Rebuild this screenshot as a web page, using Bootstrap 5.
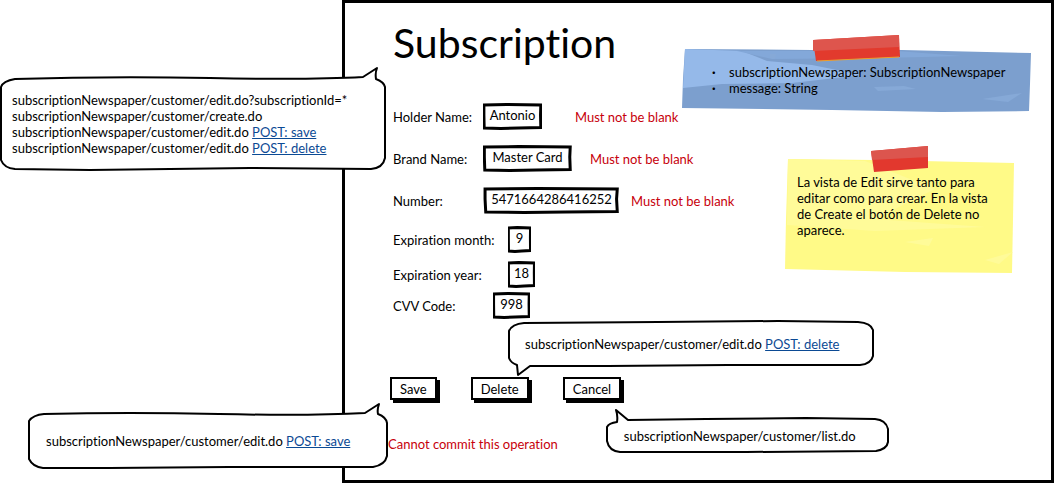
<!DOCTYPE html>
<html lang="en">
<head>
<meta charset="utf-8">
<meta name="viewport" content="width=device-width, initial-scale=1">
<title>Subscription</title>
<link href="https://cdn.jsdelivr.net/npm/bootstrap@5.3.0/dist/css/bootstrap.min.css" rel="stylesheet">
<style>
  body { font-family: Lato, "Open Sans", sans-serif; font-size: 13px; line-height: 16px; color: #000; background: #fff; font-variant-ligatures: none; }
  h1 { font-size: 41px; line-height: 48px; font-weight: 400; }
  a { color: #0b4a94; }
  .side-notes { width: 342px; padding-top: 78px; gap: 243px; }
  .screen { border: 3px solid #000; margin-right: 1px; padding-bottom: 25px; min-width: 0; }
  .callout { z-index: 2; flex: none; }
  .callout svg, .sticky > svg { position: absolute; overflow: visible; left: 0; top: 0; z-index: -1; }
  .callout svg { fill: #fff; stroke: #000; stroke-width: 2; stroke-linejoin: round; stroke-linecap: round; }
  .callout-urls { width: 386px; padding: 14px 12px; }
  .callout-save { width: 358px; padding: 20px 17px 19px; margin-left: 29px; }
  .callout-delete { width: 366px; padding: 15px 17px 14px; margin-left: 163px; margin-top: 2px; }
  .callout-list { width: 283px; padding: 10px 18px 9px; }
  .content-area { padding-left: 48px; flex: 1 1 0; min-width: 0; }
  .fields { padding-top: 36px; gap: 15px; }
  .fields-short { gap: 8px; padding-top: 12px; }
  .field-label, .field-label-wide, .field-label-code, .error, .sketch-input { flex: none; white-space: nowrap; }
  .field-label { width: 90px; }
  .field-label-wide { width: 115px; }
  .field-label-code { width: 100px; }
  .sketch-input { border: 0; border-radius: 0; height: 27px; padding: 0 4px 3px; text-align: center; color: #000;
    background: url("data:image/svg+xml,%3Csvg xmlns='http://www.w3.org/2000/svg' viewBox='0 0 100 27' preserveAspectRatio='none'%3E%3Cpath d='M1.500 2L40 1.500 98 2 97.500 12 98 24.500 60 25 30 25.500 2 25 1.500 12Z' fill='white' stroke='black' stroke-width='3' vector-effect='non-scaling-stroke'/%3E%3C/svg%3E") 0 0 / 100% 100% no-repeat; }
  .w-name { width: 59px; } .w-brand { width: 89px; } .w-number { width: 137px; }
  .w-month { width: 23px; } .w-year { width: 27px; } .w-code { width: 37px; }
  .error { color: #c7000b; }
  .gap-name { margin-left: 33px; } .gap-brand { margin-left: 18px; } .gap-number { margin-left: 11px; }
  .actions { padding: 11px 0 0 45px; gap: 34px; }
  .sketch-btn { border: 2px solid #000; border-radius: 0; background: #fff; color: #000; height: 23px; padding: 0 8px; line-height: 16px; box-shadow: 3px 3px 0 #000; }
  .footer-row { padding: 18px 0 0 43px; gap: 48px; }
  .sticky-column { width: 370px; padding: 46px 20px 0 0; gap: 47px; }
  .sticky { z-index: 0; }
  .sticky-model { width: 349px; height: 63px; padding: 15px 0 0 47px; }
  .sticky-model li::before { content: "·"; font-weight: 700; position: absolute; left: -17px; }
  .sticky-view { width: 229px; height: 115px; padding: 15px 16px 0 12px; margin-right: 17px; }
</style>
</head>
<body>
<main class="d-flex min-vh-100">
  <aside class="side-notes d-flex flex-column flex-shrink-0">
    <div class="callout callout-urls position-relative">
      <svg width="386" height="92" aria-hidden="true"><path d="M15 1Q110-2 210 0T363-1L377-10Q375-5 376 1Q384 4 385 9V80Q383 90 371 91L250 90 90 92 15 91Q4 90 1 82V9Q3 3 15 1Z"/></svg>
      <div>subscriptionNewspaper/customer/edit.do?subscriptionId=*</div>
      <div>subscriptionNewspaper/customer/create.do</div>
      <div>subscriptionNewspaper/customer/edit.do <a href="#save">POST: save</a></div>
      <div>subscriptionNewspaper/customer/edit.do <a href="#delete">POST: delete</a></div>
    </div>
    <div class="callout callout-save position-relative">
      <svg width="358" height="55" aria-hidden="true"><path d="M15 1Q100-1 190 1T336 0L350-9Q348-3 349 1Q357 4 358 10V43Q356 52 344 54L200 54 80 55 14 55Q4 54 0 46V8Q4 2 15 1Z"/></svg>
      subscriptionNewspaper/customer/edit.do <a href="#save">POST: save</a>
    </div>
  </aside>

  <form class="screen flex-grow-1" onsubmit="return false">
    <div class="d-flex justify-content-between">
      <div class="content-area">
        <h1 class="mb-0 pt-3">Subscription</h1>
        <div class="fields d-flex flex-column">
          <div class="d-flex align-items-center">
            <label class="field-label" for="holder">Holder Name:</label>
            <input id="holder" class="sketch-input w-name" value="Antonio">
            <span class="error gap-name">Must not be blank</span>
          </div>
          <div class="d-flex align-items-center">
            <label class="field-label" for="brand">Brand Name:</label>
            <input id="brand" class="sketch-input w-brand" value="Master Card">
            <span class="error gap-brand">Must not be blank</span>
          </div>
          <div class="d-flex align-items-center">
            <label class="field-label" for="number">Number:</label>
            <input id="number" class="sketch-input w-number" value="5471664286416252">
            <span class="error gap-number">Must not be blank</span>
          </div>
        </div>
        <div class="fields-short d-flex flex-column">
          <div class="d-flex align-items-center">
            <label class="field-label-wide" for="month">Expiration month:</label>
            <input id="month" class="sketch-input w-month" value="9">
          </div>
          <div class="d-flex align-items-center">
            <label class="field-label-wide" for="year">Expiration year:</label>
            <input id="year" class="sketch-input w-year" value="18">
          </div>
        </div>
        <div class="d-flex align-items-center pt-1">
          <label class="field-label-code" for="code">CVV Code:</label>
          <input id="code" class="sketch-input w-code" value="998">
        </div>
      </div>

      <div class="sticky-column d-flex flex-column align-items-end flex-shrink-0">
        <div class="sticky sticky-model position-relative">
          <svg width="349" height="63" aria-hidden="true">
            <path d="M3 0L130 1 220 1 349 4 348 35 347 62 260 63 150 61 0 59 1 30Z" fill="#7c9fce"/>
            <path d="M3 0L60 2 85 12 130 16 180 26 110 34 40 35 1 39Z" fill="#95b9e9"/>
            <path d="M55 2L215 2 280 7 200 9 90 10Z" fill="#83a8d9"/>
            <path d="M88 5h6l-1 5-5-1ZM192 38l30-1 12 3-38 2ZM300 50l40-6-14 9Z" fill="#86a9d7"/>
            <path d="M131-9L217-14 218 8 134 12Z" fill="#e23a2d"/>
            <path d="M131-9L217-14V-2L131 2Z" fill="#de554d"/>
            <path d="M135 12L217 8" stroke="#eda02c"/>
          </svg>
          <ul class="list-unstyled mb-0">
            <li class="position-relative">subscriptionNewspaper: SubscriptionNewspaper</li>
            <li class="position-relative">message: String</li>
          </ul>
        </div>
        <div class="sticky sticky-view position-relative">
          <svg width="229" height="115" aria-hidden="true">
            <path d="M3 0L90 1 229 4 228 60 227 114 120 113 0 110 1 60Z" fill="#fffa87"/>
            <path d="M3 0L80 2 150 30 90 60 200 68 90 72 2 66Z" fill="#fffb99"/>
            <path d="M120 83l28-4-4 8ZM200 101l28-8-14 12Z" fill="#fffb99"/>
            <path d="M86-8L143-13V9L89 13Z" fill="#e2382e"/>
            <path d="M86-8L143-13V-2L87 1Z" fill="#dc554e"/>
          </svg>
          La vista de Edit sirve tanto para editar como para crear. En la vista de Create el botón de Delete no aparece.
        </div>
      </div>
    </div>

    <div class="callout callout-delete position-relative">
      <svg width="366" height="45" aria-hidden="true"><path d="M16 2L150 1 270 0 350 1Q363 2 365 9V35Q363 43 352 44L220 44 100 45 22 45L10 54 9 44Q3 42 1 37V10Q4 3 16 2Z"/></svg>
      subscriptionNewspaper/customer/edit.do <a href="#delete">POST: delete</a>
    </div>
    <div class="actions d-flex">
      <button class="sketch-btn" type="submit">Save</button>
      <button class="sketch-btn" type="button">Delete</button>
      <button class="sketch-btn" type="button">Cancel</button>
    </div>
    <div class="footer-row d-flex align-items-center">
      <div class="error pt-3">Cannot commit this operation</div>
      <div class="callout callout-list position-relative">
        <svg width="283" height="35" aria-hidden="true"><path d="M22 2L10-8Q12-2 11 4Q3 5 1 9V23Q3 33 14 34L140 34 270 33Q281 31 282 24V11Q280 2 269 1L200 0 100 1Z"/></svg>
        subscriptionNewspaper/customer/list.do
      </div>
    </div>
  </form>
</main>
<script src="https://cdn.jsdelivr.net/npm/bootstrap@5.3.0/dist/js/bootstrap.bundle.min.js"></script>
</body>
</html>
